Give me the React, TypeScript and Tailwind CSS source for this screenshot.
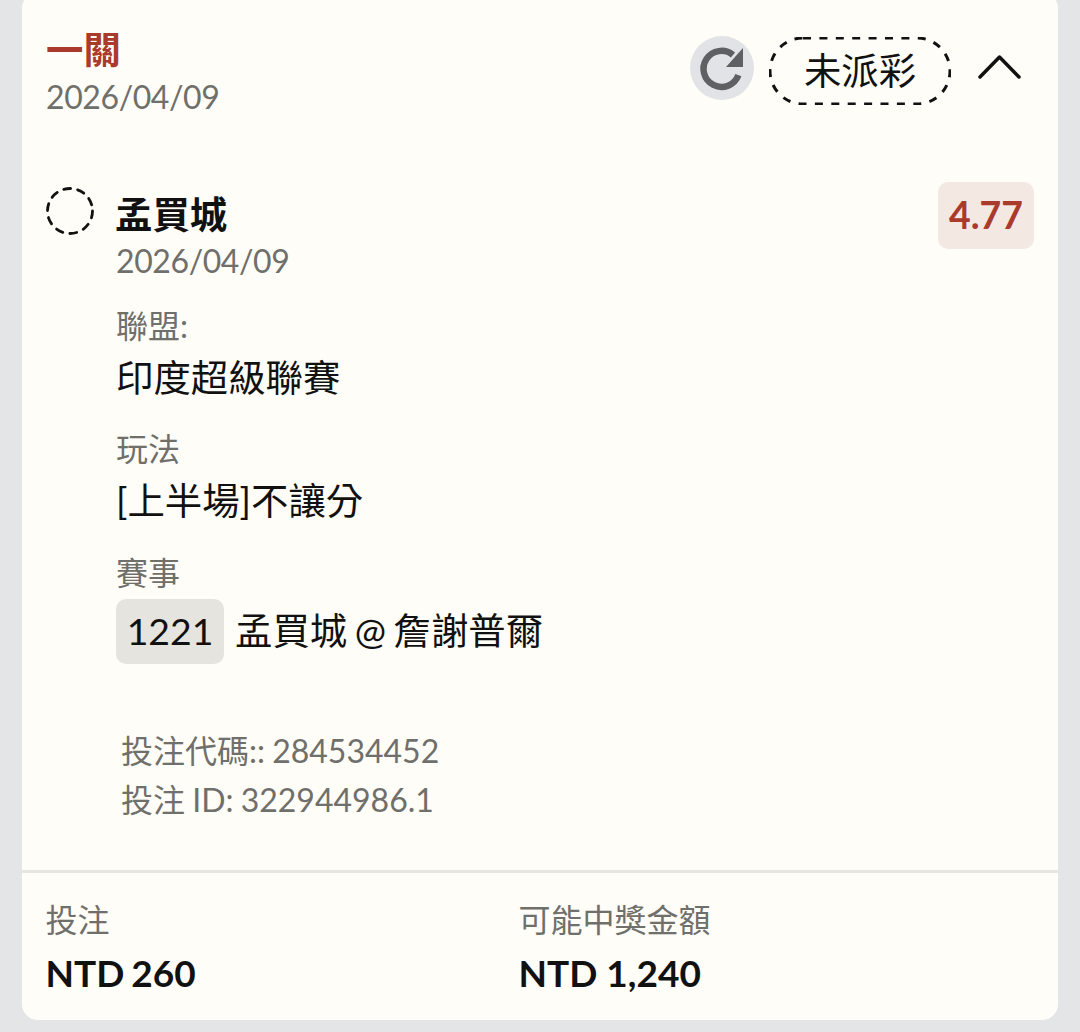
const FONT = "font-['Lato','Noto_Sans_CJK_TC','Noto_Sans',sans-serif]";

function RefreshIcon() {
  return (
    <svg viewBox="0 0 64 64" className="h-[64px] w-[64px] shrink-0">
      <circle cx="32" cy="32" r="32" fill="#e1e3e6" />
      <path d="M48.4 39.2A18 18 0 1 1 43 19" fill="none" stroke="#5f6062" strokeWidth="6.5" />
      <path d="M53 12V31H36Z" fill="#5f6062" />
    </svg>
  );
}

function DashedCircle() {
  return (
    <svg viewBox="0 0 48 48" className="h-[48px] w-[48px]">
      <circle cx="24" cy="24" r="22.5" fill="none" stroke="#111" strokeWidth="2.8" strokeDasharray="7 7.14" strokeLinecap="round" />
    </svg>
  );
}

function Field({ label, value }: { label: string; value: string }) {
  return (
    <div className="mt-[12px]">
      <p className="h-[50px] text-[32px] leading-[48px] text-[#6f6f6b]">{label}</p>
      <p className="h-[61.5px] text-[37.4px] leading-[52px] text-[#111]">{value}</p>
    </div>
  );
}

export default function App() {
  return (
    <div className={`${FONT} h-[1032px] overflow-hidden bg-[#e3e5e7] px-[22px]`}>
      <div className="-mt-[8px] h-[1028px] overflow-hidden rounded-[16px] bg-[#fffdf7]">
        <header className="flex h-[128px] justify-between pt-[36px] pr-[36px] pl-[24px]">
          <div>
            <h2 className="h-[48px] text-[37.4px] leading-[44px] font-bold text-[#a93a2c]">一關</h2>
            <p className="text-[32px] leading-[42px] tracking-[-0.4px] text-[#6f6f6b]">2026/04/09</p>
          </div>
          <div className="mt-[8px] flex h-[72px] items-start">
            <RefreshIcon />
            <span className="relative mt-[1px] ml-[15px] flex h-[68px] w-[182px] items-center justify-center text-[37.4px] text-[#111]">
              <svg viewBox="0 0 182 68" className="absolute inset-0 h-[68px] w-[182px]">
                <rect x="1" y="1" width="180" height="66" rx="33" fill="none" stroke="#111" strokeWidth="3" strokeDasharray="8 8.4" />
              </svg>
              未派彩
            </span>
            <svg viewBox="0 0 44 26" className="mt-[18px] ml-[27px] h-[26px] w-[44px]">
              <path d="M2 23 21.5 3 41 23" fill="none" stroke="#111" strokeWidth="3.5" strokeLinecap="round" strokeLinejoin="round" />
            </svg>
          </div>
        </header>

        <section className="flex items-start pt-[62px] pr-[24px] pl-[24px]">
          <div className="mt-[5px] h-[48px] w-[48px] shrink-0">
            <DashedCircle />
          </div>
          <div className="ml-[22px] flex-1">
            <h3 className="-ml-px h-[55px] text-[37.4px] leading-[66px] font-bold text-[#111]">孟買城</h3>
            <p className="h-[52.5px] text-[32px] leading-[48px] tracking-[-0.4px] text-[#6f6f6b]">2026/04/09</p>
            <Field label="聯盟:" value="印度超級聯賽" />
            <Field label="玩法" value="[上半場]不讓分" />
            <div className="mt-[12px]">
              <p className="h-[50px] text-[32px] leading-[48px] text-[#6f6f6b]">賽事</p>
              <div className="flex items-center">
                <span className="flex h-[65px] w-[108px] items-center justify-center rounded-[10px] bg-[#e5e4df] text-[37.4px] text-[#111]">
                  1221
                </span>
                <span className="ml-[11px] text-[37.4px] text-[#111] [word-spacing:-2px]">孟買城 @ 詹謝普爾</span>
              </div>
            </div>
            <div className="mt-[62px] pl-[5px] text-[32px] leading-[49px] text-[#6f6f6b]">
              <p className="[word-spacing:-1px]">投注代碼:: 284534452</p>
              <p className="[word-spacing:-1px]">投注 ID: 322944986.1</p>
            </div>
          </div>
          <span className="flex h-[67px] w-[96px] shrink-0 items-center justify-center rounded-[10px] bg-[#f3e8e2] text-[37.4px] font-bold text-[#a93a2c]">
            4.77
          </span>
        </section>

        <footer className="mt-[46px] grid grid-cols-[473px_1fr] border-t-[3px] border-[#e8e6e0] px-[23.5px] pt-[23px]">
          <div>
            <p className="text-[32px] leading-[48px] text-[#6f6f6b]">投注</p>
            <p className="mt-[2px] text-[37px] leading-[54px] font-bold text-[#111] [word-spacing:-2px]">NTD 260</p>
          </div>
          <div>
            <p className="text-[32px] leading-[48px] text-[#6f6f6b]">可能中獎金額</p>
            <p className="mt-[2px] text-[37px] leading-[54px] font-bold text-[#111]">NTD 1,240</p>
          </div>
        </footer>
      </div>
    </div>
  );
}
